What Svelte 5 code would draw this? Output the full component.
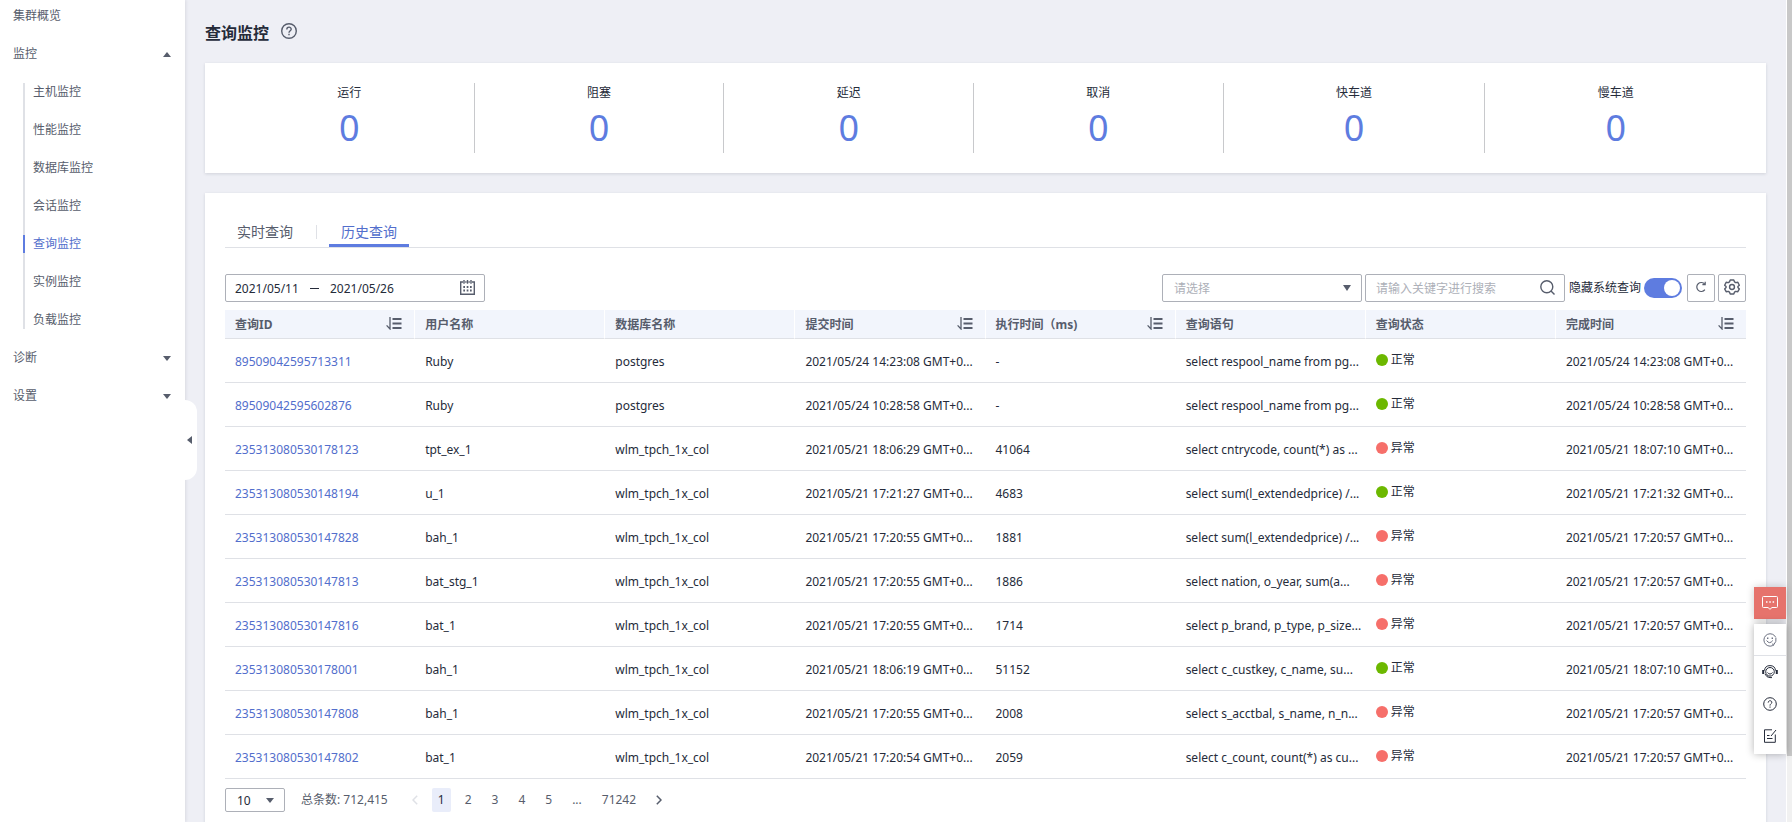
<script>
    let monitorItems = [
        "主机监控",
        "性能监控",
        "数据库监控",
        "会话监控",
        "查询监控",
        "实例监控",
        "负载监控",
    ];
    let activeItem = "查询监控";

    let stats = [
        { label: "运行", value: 0 },
        { label: "阻塞", value: 0 },
        { label: "延迟", value: 0 },
        { label: "取消", value: 0 },
        { label: "快车道", value: 0 },
        { label: "慢车道", value: 0 },
    ];

    let tabs = ["实时查询", "历史查询"];
    let activeTab = "历史查询";

    let columns = [
        { title: "查询ID", sortable: true },
        { title: "用户名称" },
        { title: "数据库名称" },
        { title: "提交时间", sortable: true },
        { title: "执行时间（ms)", sortable: true },
        { title: "查询语句" },
        { title: "查询状态" },
        { title: "完成时间", sortable: true },
    ];

    let rows = [
        { id: "89509042595713311", user: "Ruby", db: "postgres", start: "2021/05/24 14:23:08 GMT+0...", time: "-", sql: "select respool_name from pg...", ok: true, end: "2021/05/24 14:23:08 GMT+0..." },
        { id: "89509042595602876", user: "Ruby", db: "postgres", start: "2021/05/24 10:28:58 GMT+0...", time: "-", sql: "select respool_name from pg...", ok: true, end: "2021/05/24 10:28:58 GMT+0..." },
        { id: "235313080530178123", user: "tpt_ex_1", db: "wlm_tpch_1x_col", start: "2021/05/21 18:06:29 GMT+0...", time: "41064", sql: "select cntrycode, count(*) as ...", ok: false, end: "2021/05/21 18:07:10 GMT+0..." },
        { id: "235313080530148194", user: "u_1", db: "wlm_tpch_1x_col", start: "2021/05/21 17:21:27 GMT+0...", time: "4683", sql: "select sum(l_extendedprice) /...", ok: true, end: "2021/05/21 17:21:32 GMT+0..." },
        { id: "235313080530147828", user: "bah_1", db: "wlm_tpch_1x_col", start: "2021/05/21 17:20:55 GMT+0...", time: "1881", sql: "select sum(l_extendedprice) /...", ok: false, end: "2021/05/21 17:20:57 GMT+0..." },
        { id: "235313080530147813", user: "bat_stg_1", db: "wlm_tpch_1x_col", start: "2021/05/21 17:20:55 GMT+0...", time: "1886", sql: "select nation, o_year, sum(a...", ok: false, end: "2021/05/21 17:20:57 GMT+0..." },
        { id: "235313080530147816", user: "bat_1", db: "wlm_tpch_1x_col", start: "2021/05/21 17:20:55 GMT+0...", time: "1714", sql: "select p_brand, p_type, p_size...", ok: false, end: "2021/05/21 17:20:57 GMT+0..." },
        { id: "235313080530178001", user: "bah_1", db: "wlm_tpch_1x_col", start: "2021/05/21 18:06:19 GMT+0...", time: "51152", sql: "select c_custkey, c_name, su...", ok: true, end: "2021/05/21 18:07:10 GMT+0..." },
        { id: "235313080530147808", user: "bah_1", db: "wlm_tpch_1x_col", start: "2021/05/21 17:20:55 GMT+0...", time: "2008", sql: "select s_acctbal, s_name, n_n...", ok: false, end: "2021/05/21 17:20:57 GMT+0..." },
        { id: "235313080530147802", user: "bat_1", db: "wlm_tpch_1x_col", start: "2021/05/21 17:20:54 GMT+0...", time: "2059", sql: "select c_count, count(*) as cu...", ok: false, end: "2021/05/21 17:20:57 GMT+0..." },
    ];

    let pages = ["1", "2", "3", "4", "5", "...", "71242"];
    let currentPage = "1";

    let startDate = "2021/05/11";
    let endDate = "2021/05/26";
    let keyword = "";
    let filter = "";
    let pageSize = "10";
    let hideSystem = true;
</script>

<div class="layout">
    <aside class="sidebar">
        <nav class="menu">
            <a class="menu__item" href="#overview">集群概览</a>
            <button class="menu__item">
                监控
                <svg width="8" height="5" viewBox="0 0 8 5"><path d="M0 5L4 0L8 5Z" fill="#575d6c" /></svg>
            </button>
            <div class="submenu">
                {#each monitorItems as item}
                    <a class="submenu__item" class:active={item === activeItem} href="#{item}" on:click={() => (activeItem = item)}>{item}</a>
                {/each}
            </div>
            {#each ["诊断", "设置"] as item}
                <button class="menu__item">
                    {item}
                    <svg width="8" height="5" viewBox="0 0 8 5"><path d="M0 0L4 5L8 0Z" fill="#575d6c" /></svg>
                </button>
            {/each}
        </nav>
        <button class="collapse" aria-label="收起">
            <svg width="5" height="8" viewBox="0 0 5 8"><path d="M5 0L0 4L5 8Z" fill="#575d6c" /></svg>
        </button>
    </aside>

    <main class="main">
        <header class="title">
            <h1>查询监控</h1>
            <svg width="16" height="16" viewBox="0 0 16 16" fill="none" stroke="#575d6c" stroke-width="1.4">
                <circle cx="8" cy="8" r="7.3" />
                <path d="M5.8 6.5C5.8 3.4 10.3 3.5 10.2 6.2C10.2 7.8 8 7.8 8 9.8" />
                <path d="M8 10.8V12.2" />
            </svg>
        </header>

        <section class="card stats">
            {#each stats as stat}
                <div class="stat">
                    <span class="stat__label">{stat.label}</span>
                    <span class="stat__value">{stat.value}</span>
                </div>
            {/each}
        </section>

        <section class="card content">
            <div class="tabs" role="tablist">
                {#each tabs as tab}
                    <button class="tab" class:active={tab === activeTab} role="tab" aria-selected={tab === activeTab} on:click={() => (activeTab = tab)}>{tab}</button>
                {/each}
            </div>

            <div class="toolbar">
                <div class="field dates">
                    <input aria-label="开始日期" bind:value={startDate} />
                    <span class="dash"></span>
                    <input aria-label="结束日期" bind:value={endDate} />
                    <svg width="15" height="16" viewBox="0 0 15 16" fill="none" stroke="#575d6c" stroke-width="1.4">
                        <path d="M3 2H.7V14.3H14.3V2H12M5.2 2H6.6M8.4 2H9.8" />
                        <path d="M4 0V3.8M7.5 0V3.8M11 0V3.8" />
                        <path d="M3.3 7H5M6.7 7H8.4M10 7H11.7M3.3 10.5H5M6.7 10.5H8.4M10 10.5H11.7" stroke-width="1.8" />
                    </svg>
                </div>

                <div class="tools">
                    <div class="field select">
                        <select class="placeholder" aria-label="筛选" bind:value={filter}>
                            <option value="">请选择</option>
                        </select>
                        <svg class="caret" width="8" height="6" viewBox="0 0 8 6"><path d="M0 0L4 6L8 0Z" fill="#575d6c" /></svg>
                    </div>
                    <div class="field search">
                        <input aria-label="搜索" placeholder="请输入关键字进行搜索" bind:value={keyword} />
                        <svg width="15" height="16" viewBox="0 0 15 16" fill="none" stroke="#575d6c" stroke-width="1.4">
                            <circle cx="6.8" cy="6.8" r="6" />
                            <path d="M11 11L14.5 14.5" />
                        </svg>
                    </div>
                    <label class="switch">
                        隐藏系统查询
                        <input type="checkbox" bind:checked={hideSystem} />
                    </label>
                    <button class="icon-button" aria-label="刷新">
                        <svg width="12" height="12" viewBox="0 0 12 12" fill="none" stroke="#575d6c" stroke-width="1.2">
                            <path d="M9.8 3.2A4.5 4.5 0 1 0 9.9 8.7" />
                            <path d="M10.2 .8V3.6H7.4" />
                        </svg>
                    </button>
                    <button class="icon-button" aria-label="设置列">
                        <svg width="16" height="16" viewBox="0 0 17 17" fill="none" stroke="#575d6c" stroke-width="1.5" stroke-linejoin="round">
                            <path d="M6.6 1H10.4L11.1 3L12.6 3.9L14.7 3.5L16.3 6.6L14.8 8.1V9L16.3 10.5L14.7 13.5L12.6 13.1L11.1 14L10.4 16H6.6L5.9 14L4.4 13.1L2.3 13.5L.7 10.5L2.2 9V8.1L.7 6.6L2.3 3.5L4.4 3.9L5.9 3Z" />
                            <circle cx="8.5" cy="8.5" r="2.6" />
                        </svg>
                    </button>
                </div>
            </div>

            <table>
                <thead>
                    <tr>
                        {#each columns as column}
                            <th>
                                <div class="head">
                                    {column.title}
                                    {#if column.sortable}
                                        <button class="sort" aria-label="排序">
                                            <svg width="16" height="13" viewBox="0 0 16 13" fill="none" stroke="#575d6c">
                                                <path d="M4 0V12L.6 8.4" stroke-width="1.3" />
                                                <path d="M6.5 2H15.5M6.5 6.5H15.5M6.5 11H15.5" stroke-width="1.8" />
                                            </svg>
                                        </button>
                                    {/if}
                                </div>
                            </th>
                        {/each}
                    </tr>
                </thead>
                <tbody>
                    {#each rows as row}
                        <tr>
                            <td><a href="#{row.id}">{row.id}</a></td>
                            <td>{row.user}</td>
                            <td>{row.db}</td>
                            <td>{row.start}</td>
                            <td>{row.time}</td>
                            <td>{row.sql}</td>
                            <td class="state">
                                <div class="status" class:error={!row.ok}>{row.ok ? "正常" : "异常"}</div>
                            </td>
                            <td>{row.end}</td>
                        </tr>
                    {/each}
                </tbody>
            </table>

            <footer class="pager">
                <div class="field select select--small">
                    <select aria-label="每页条数" bind:value={pageSize}>
                        <option>10</option>
                        <option>20</option>
                        <option>50</option>
                    </select>
                    <svg class="caret" width="8" height="5" viewBox="0 0 8 5"><path d="M0 0L4 5L8 0Z" fill="#575d6c" /></svg>
                </div>
                <span class="total">总条数: 712,415</span>
                <div class="pages">
                    <button class="page" aria-label="上一页" disabled>
                        <svg width="6" height="10" viewBox="0 0 6 10" fill="none" stroke="#dfe1e6" stroke-width="1.5"><path d="M5.2 .8L1 5L5.2 9.2" /></svg>
                    </button>
                    {#each pages as page}
                        <button class="page" class:active={page === currentPage} on:click={() => (currentPage = page)}>{page}</button>
                    {/each}
                    <button class="page" aria-label="下一页">
                        <svg width="6" height="10" viewBox="0 0 6 10" fill="none" stroke="#575d6c" stroke-width="1.5"><path d="M.8 .8L5 5L.8 9.2" /></svg>
                    </button>
                </div>
            </footer>
        </section>
    </main>

    <div class="scrollbar"><div class="scrollbar__thumb"></div></div>

    <div class="float">
        <button class="float__chat" aria-label="反馈">
            <svg width="16" height="14" viewBox="0 0 16 14" fill="none" stroke="#fff">
                <path d="M1.5 .5H14.5Q15.5 .5 15.5 1.5V10.5Q15.5 11.5 14.5 11.5H10L8 13.3L6 11.5H1.5Q.5 11.5 .5 10.5V1.5Q.5 .5 1.5 .5Z" />
                <path d="M4 6H5.5M7.3 6H8.8M10.6 6H12.1" stroke-width="1.4" />
            </svg>
        </button>
        <div class="float__panel">
            <button aria-label="满意度">
                <svg width="14" height="14" viewBox="0 0 14 14" fill="none" stroke="#6b7080">
                    <path d="M9.5 12.7A6.2 6.2 0 1 1 12.8 4.5" />
                    <path d="M12.9 5Q14.2 8 10 12.8L9.8 10.5" />
                    <path d="M3.6 7.5Q6.5 11.8 9.8 7.5" />
                    <path d="M4 5.2H5.4M8.6 5.2H10" stroke-width="1.4" />
                </svg>
            </button>
            <button aria-label="客服">
                <svg width="16" height="14" viewBox="0 0 16 14" fill="none" stroke="#252b3a">
                    <path d="M2.5 5.5Q3 .6 8 .6Q13 .6 13.5 5.5" />
                    <circle cx="8" cy="6.8" r="4.3" />
                    <path d="M5.5 7.5Q8 10.6 10.5 7.5" />
                    <path d="M3 9Q4.5 12.6 8 12.6H10" />
                    <path d="M1.2 5V9M14.8 5V9" stroke-width="2" />
                </svg>
            </button>
            <button aria-label="帮助">
                <svg width="14" height="14" viewBox="0 0 14 14" fill="none" stroke="#252b3a">
                    <circle cx="7" cy="7" r="6.3" />
                    <path d="M5.2 5.6C5.2 3.1 8.9 3.2 8.8 5.4C8.8 6.8 7 6.8 7 8.6M7 9.5V10.7" />
                </svg>
            </button>
            <button aria-label="建议">
                <svg width="14" height="14" viewBox="0 0 14 14" fill="none" stroke="#252b3a">
                    <path d="M9 .8H1.5V13.3H12.3V5.5" />
                    <path d="M4 6.5H6.5M4 9.5H9.5M8 7L13 1" />
                </svg>
            </button>
        </div>
    </div>
</div>

<style>
    :global(body) {
        font-family: "Noto Sans", "Noto Sans CJK SC", sans-serif;
        font-size: 12px;
        line-height: 18px;
        color: #252b3a;
        background: #eeeff5;
    }

    button,
    input,
    select {
        font: inherit;
        color: inherit;
        background: none;
        border: 0;
        padding: 0;
        margin: 0;
        outline: none;
    }

    button {
        cursor: pointer;
    }

    svg {
        display: block;
        flex: none;
    }

    a {
        color: #526ecc;
        text-decoration: none;
    }

    .layout {
        display: flex;
        height: 100vh;
        overflow: hidden;
    }

    .sidebar {
        position: relative;
        z-index: 1;
        flex: none;
        width: 185px;
        background: #fff;
        box-shadow: 1px 0 3px rgba(37, 43, 58, 0.1);
    }

    .menu {
        display: flex;
        flex-direction: column;
        gap: 20px;
        padding: 7px 14px 0 13px;
        color: #575d6c;
    }

    .menu__item {
        display: flex;
        align-items: center;
        justify-content: space-between;
        height: 18px;
        color: #575d6c;
    }

    .submenu {
        display: flex;
        flex-direction: column;
        gap: 20px;
        margin-left: 10px;
        box-shadow: inset 2px 0 #dfe1e6;
    }

    .submenu__item {
        padding-left: 8px;
        border-left: 2px solid transparent;
        color: #575d6c;
    }

    .submenu__item.active {
        color: #526ecc;
        border-color: #5e7ce0;
    }

    .collapse {
        position: absolute;
        left: 100%;
        top: 400px;
        width: 12px;
        height: 80px;
        padding-left: 2px;
        background: #fff;
        border-radius: 0 12px 12px 0;
    }

    .main {
        flex: 1;
        min-width: 0;
        padding: 20px;
    }

    .title {
        display: flex;
        align-items: flex-start;
        gap: 12px;
        height: 24px;
        padding-top: 3px;
        margin-bottom: 16px;
    }

    .title h1 {
        margin: 0;
        font-size: 16px;
        line-height: 20px;
        font-weight: 700;
    }

    .card {
        background: #fff;
        box-shadow: 0 1px 3px rgba(37, 43, 58, 0.14);
    }

    .stats {
        display: flex;
        padding: 20px;
        margin-bottom: 20px;
    }

    .stat {
        flex: 1 1 auto;
        display: flex;
        flex-direction: column;
        align-items: center;
        justify-content: flex-end;
        height: 70px;
    }

    .stat + .stat {
        border-left: 1px solid #c8c9cc;
    }

    .stat__value {
        font-size: 36px;
        line-height: 51px;
        color: #5e7ce0;
    }

    .content {
        padding: 20px 20px 60px;
    }

    .tabs {
        display: flex;
        align-items: center;
        gap: 24px;
        border-bottom: 1px solid #dfe1e6;
        margin-bottom: 26px;
    }

    .tab {
        position: relative;
        height: 34px;
        padding: 4px 12px 0;
        font-size: 14px;
        color: #575d6c;
    }

    .tab + .tab::before {
        content: "";
        position: absolute;
        left: -13px;
        top: 12px;
        width: 1px;
        height: 14px;
        background: #dfe1e6;
    }

    .tab.active {
        color: #526ecc;
        box-shadow: inset 0 -3px #5e7ce0;
    }

    .toolbar {
        display: flex;
        justify-content: space-between;
        margin-bottom: 8px;
    }

    .field {
        box-sizing: border-box;
        display: flex;
        align-items: center;
        height: 28px;
        border: 1px solid #adb0b8;
        border-radius: 2px;
        background: #fff;
    }

    .dates {
        width: 260px;
        padding: 0 9px;
    }

    .dates input {
        width: 75px;
        padding-top: 1px;
    }

    .dates .dash {
        width: 9px;
        height: 1px;
        margin-right: 11px;
        background: #252b3a;
    }

    .dates svg {
        margin-left: auto;
    }

    .tools {
        display: flex;
        align-items: center;
        gap: 3px;
    }

    .select {
        position: relative;
        width: 200px;
    }

    .select select {
        width: 100%;
        height: 100%;
        padding: 2px 11px 0;
        appearance: none;
    }

    .select .placeholder {
        color: #adb0b8;
    }

    .caret {
        position: absolute;
        right: 10px;
        pointer-events: none;
    }

    .search {
        width: 200px;
        padding: 0 9px 0 10px;
    }

    .search input {
        flex: 1;
        min-width: 0;
        padding-top: 2px;
    }

    .search input::placeholder {
        color: #adb0b8;
        opacity: 1;
    }

    .switch {
        display: flex;
        align-items: center;
        gap: 3px;
        margin: 0 2px 0 1px;
    }

    .switch input {
        display: flex;
        align-items: center;
        width: 38px;
        height: 20px;
        padding: 2px;
        box-sizing: border-box;
        border-radius: 10px;
        background: #adb0b8;
        appearance: none;
    }

    .switch input::before {
        content: "";
        width: 16px;
        height: 16px;
        border-radius: 50%;
        background: #fff;
    }

    .switch input:checked {
        justify-content: flex-end;
        background: #5e7ce0;
    }

    .icon-button {
        display: flex;
        align-items: center;
        justify-content: center;
        box-sizing: border-box;
        width: 28px;
        height: 28px;
        padding-bottom: 2px;
        border: 1px solid #adb0b8;
        border-radius: 2px;
    }

    table {
        width: 100%;
        table-layout: fixed;
        border-collapse: separate;
        border-spacing: 0;
    }

    th {
        height: 26px;
        padding: 2px 12px 0 10px;
        background: #f2f5fc;
        border-bottom: 1px solid #dfe1e6;
        text-align: left;
        font-weight: 700;
        color: #575d6c;
    }

    th:not(:last-child) {
        border-right: 1px solid #fff;
    }

    .head {
        display: flex;
        align-items: center;
        justify-content: space-between;
    }

    .sort {
        padding-bottom: 4px;
    }

    td {
        height: 41px;
        padding: 2px 10px 0;
        border-bottom: 1px solid #dfe1e6;
        white-space: nowrap;
        overflow: hidden;
    }

    .state {
        padding: 0 10px 2px;
    }

    .status {
        display: flex;
        align-items: center;
        gap: 3px;
        padding-top: 1px;
    }

    .status::before {
        content: "";
        width: 12px;
        height: 12px;
        border-radius: 50%;
        background: #6cb800;
    }

    .status.error::before {
        background: #f66f6a;
    }

    .pager {
        display: flex;
        align-items: center;
        gap: 16px;
        margin-top: 9px;
        color: #575d6c;
    }

    .select--small {
        width: 60px;
        height: 24px;
        color: #252b3a;
    }

    .pages {
        display: flex;
        align-items: center;
        gap: 8px;
        padding-left: 2px;
    }

    .page {
        display: flex;
        align-items: center;
        justify-content: center;
        height: 24px;
        padding: 0 6px;
        border-radius: 2px;
    }

    .page.active {
        color: #252b3a;
        background: #e9edfa;
    }

    .scrollbar {
        flex: none;
        width: 5px;
        border-left: 1px solid #fff;
        background: #f1f1f1;
    }

    .scrollbar__thumb {
        height: 92%;
        background: #c8c8c8;
    }

    .float {
        position: fixed;
        z-index: 2;
        right: 6px;
        bottom: 68px;
        width: 32px;
        display: flex;
        flex-direction: column;
        gap: 5px;
    }

    .float button {
        display: flex;
        align-items: center;
        justify-content: center;
        width: 32px;
        height: 32px;
    }

    .float .float__chat {
        background: #e6736c;
        box-shadow: 0 0 8px rgba(0, 0, 0, 0.2);
    }

    .float__panel {
        padding-bottom: 2px;
        background: #fff;
        box-shadow: 0 0 8px rgba(0, 0, 0, 0.3);
    }

    .float__panel button:first-child {
        border-bottom: 1px solid #dfe1e6;
    }
</style>
